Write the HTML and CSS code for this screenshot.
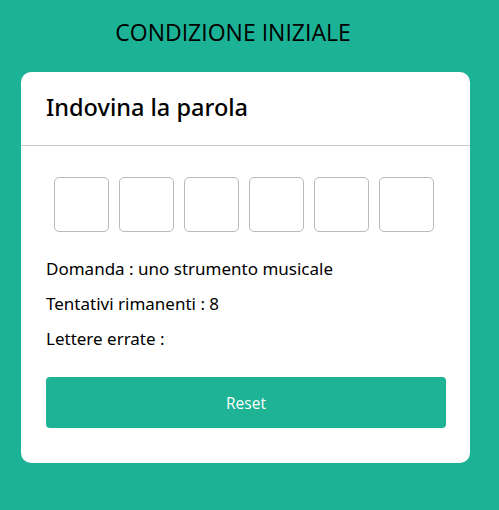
FILE: index.html
```html
<!DOCTYPE html>
<html lang="it">
<head>
<meta charset="utf-8">
<title>Indovina la parola</title>
<link rel="stylesheet" href="styles.css">
</head>
<body>
<h1 class="title">CONDIZIONE INIZIALE</h1>
<div class="card">
  <div class="card-header">
    <h2 class="card-title">Indovina la parola</h2>
  </div>
  <div class="card-body">
    <div class="slots">
      <div class="slot"></div>
      <div class="slot"></div>
      <div class="slot"></div>
      <div class="slot"></div>
      <div class="slot"></div>
      <div class="slot"></div>
    </div>
    <p class="info">Domanda : uno strumento musicale</p>
    <p class="info">Tentativi rimanenti : 8</p>
    <p class="info">Lettere errate : </p>
    <button class="reset">Reset</button>
  </div>
</div>
</body>
</html>
```
FILE: styles.css
```css
html, body {
  margin: 0;
  padding: 0;
  background: #1bb295;
}
body {
  width: 499px;
  height: 510px;
  overflow: hidden;
}
.title {
  margin: 16px 0 0 0;
  padding-right: 33px;
  text-align: center;
  font-family: "Open Sans", sans-serif;
  font-weight: 400;
  font-size: 23px;
  line-height: 32px;
  color: #000;
}
.card {
  margin: 24px 0 0 21px;
  width: 449px;
  height: 391px;
  background: #fff;
  border-radius: 10px;
  box-sizing: border-box;
}
.card-header {
  height: 74px;
  border-bottom: 1px solid #cccccc;
  box-sizing: border-box;
  padding: 20px 25px 0;
}
.card-title {
  margin: 0;
  font-family: "Noto Sans", sans-serif;
  font-weight: 500;
  font-size: 23.5px;
  line-height: 31px;
  color: #000;
}
.card-body {
  padding: 31px 24px 0 25px;
}
.slots {
  display: flex;
  gap: 10px;
  justify-content: center;
  padding-right: 4px;
  margin-bottom: 19px;
}
.slot {
  width: 55px;
  height: 55px;
  box-sizing: border-box;
  border: 1px solid #b9b9b9;
  border-radius: 5px;
}
.info {
  margin: 0;
  height: 35px;
  font-family: "Noto Sans", sans-serif;
  font-size: 17px;
  line-height: 35px;
  color: #000;
}
.reset {
  margin-top: 21px;
  display: block;
  width: 400px;
  height: 51px;
  border: none;
  border-radius: 4px;
  background: #1db394;
  color: #fff;
  font-family: "Open Sans", sans-serif;
  font-size: 15.5px;
}
```
